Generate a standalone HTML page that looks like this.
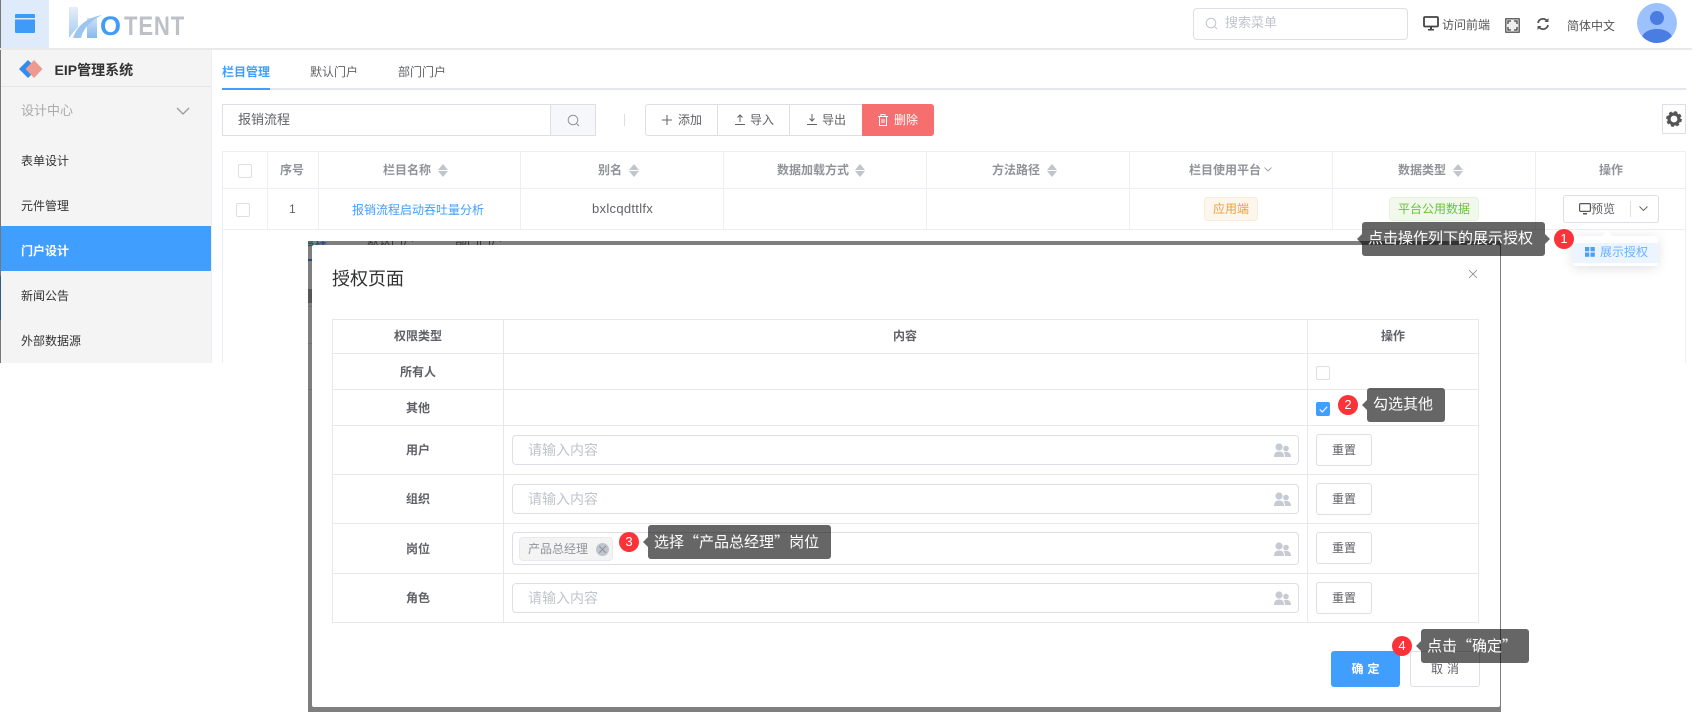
<!DOCTYPE html>
<html lang="zh-CN"><head><meta charset="utf-8"><title>授权页面</title>
<style>
*{box-sizing:border-box}
html,body{margin:0;padding:0;width:1696px;height:713px;overflow:hidden;background:#fff}
body{position:relative;font-family:"Liberation Sans","Noto Sans CJK SC",sans-serif;font-size:12px;color:#606266}
.a{position:absolute}
.t{position:absolute;white-space:nowrap;line-height:20px;height:20px}
.c{text-align:center}
.th{font-weight:700;color:#909399}
.m{color:#333;left:21px}
.v{position:absolute;width:1px;background:#ebeef5}
.h{position:absolute;height:1px;background:#ebeef5}
.mv,.mh{position:absolute;background:#e6e8ec}
.mv{width:1px;top:320px;height:303px}
.mh{height:1px;left:332px;width:1147px}
.ck{position:absolute;width:14px;height:14px;border:1px solid #dcdfe6;border-radius:2px;background:#fff}
.in{position:absolute;left:512px;width:787px;height:30px;border:1px solid #dcdfe6;border-radius:4px;background:#fff}
.ph{position:absolute;left:528px;font-size:14px;color:#c0c4cc;line-height:20px;white-space:nowrap}
.rs{position:absolute;left:1316px;width:56px;height:32px;border:1px solid #dcdfe6;border-radius:3px;background:#fff;text-align:center;line-height:30px;font-size:12px;color:#606266}
.lb{position:absolute;left:333px;width:170px;text-align:center;font-weight:700;line-height:20px;color:#606266}
.tip{position:absolute;height:34px;background:rgba(0,0,0,.6);border-radius:3px;color:#fff;font-size:15px;line-height:34px;padding-left:6px;white-space:nowrap;z-index:20}
.tip:before{content:"";position:absolute;left:-5px;top:12px;border:5px solid transparent;border-left:0;border-right-color:rgba(0,0,0,.6)}
.q{font-family:"Noto Sans CJK SC",sans-serif}
.bd{position:absolute;width:20px;height:20px;border-radius:50%;background:#fb3338;color:#fff;font-size:13px;line-height:20px;text-align:center;z-index:21}
.u{position:absolute;width:0;height:0;border:5px solid transparent;border-top:0;border-bottom:6px solid #c0c4cc}
.d{position:absolute;width:0;height:0;border:5px solid transparent;border-bottom:0;border-top:6px solid #c0c4cc}
svg{position:absolute;display:block}
</style></head><body>

<!-- left edge -->
<div class="a" style="left:0;top:0;width:1px;height:363px;background:#777"></div>
<div class="a" style="left:0;top:276px;width:1px;height:44px;background:#2e5d88"></div>

<!-- header -->
<div class="a" style="left:1px;top:0;width:48px;height:48px;background:#dfeafb"></div>
<svg style="left:15px;top:14px" width="20" height="19" viewBox="0 0 20 19"><path d="M1 0h18a1 1 0 0 1 1 1v3H0V1a1 1 0 0 1 1-1z" fill="#3f9bf8"/><path d="M0 5.500h20V18a1 1 0 0 1-1 1H1a1 1 0 0 1-1-1z" fill="#3f9bf8"/></svg>
<svg style="left:68px;top:6px" width="36" height="33" viewBox="0 0 36 33"><defs><linearGradient id="g" x1="0" y1="0" x2="0" y2="1"><stop offset="0" stop-color="#e6eef9"/><stop offset="1" stop-color="#a4cbf3"/></linearGradient><linearGradient id="g2" x1="0" y1="0" x2="0" y2="1"><stop offset="0" stop-color="#cfe1f6"/><stop offset="1" stop-color="#86b9f0"/></linearGradient></defs><path d="M1 1h9v20C7 24 4 28 1 32z" fill="url(#g)"/><path d="M19 12h10v20H19z" fill="url(#g2)"/><path d="M5 32C9 20 18 12 34 9 24 14 16 21 13 32z" fill="#9cc5f1"/></svg>
<div class="t" style="left:100px;top:11px;height:30px;line-height:30px;font-size:27px;font-weight:700;color:#419cf5">O</div>
<div class="t" style="left:124px;top:11px;height:30px;line-height:30px;font-size:27px;font-weight:700;letter-spacing:1px;color:#bcc1c8;transform:scaleX(.82);transform-origin:0 50%">TENT</div>
<div class="a" style="left:0;top:48px;width:1692px;height:2px;background:#e8e9eb"></div>

<div class="a" style="left:1193px;top:8px;width:215px;height:32px;border:1px solid #dcdfe6;border-radius:4px"></div>
<svg style="left:1205px;top:17px" width="13" height="13" viewBox="0 0 13 13" fill="none" stroke="#c0c4cc" stroke-width="1"><circle cx="6" cy="6" r="4.800"/><path d="M9.500 9.500l2.500 2.500"/></svg>
<div class="t" style="left:1225px;top:13px;font-size:13px;color:#c0c4cc">搜索菜单</div>
<svg style="left:1423px;top:16px" width="16" height="15" viewBox="0 0 16 15"><rect x="1" y="1" width="14" height="9.500" rx="1" fill="#fff" stroke="#444" stroke-width="1.800"/><path d="M5 13h6v1.500H5zM7 11h2v2H7z" fill="#444"/></svg>
<div class="t" style="left:1442px;top:15px;color:#555">访问前端</div>
<svg style="left:1505px;top:18px" width="15" height="15" viewBox="0 0 15 15"><rect width="15" height="15" rx="1" fill="#666"/><rect x="1.500" y="1.500" width="12" height="12" fill="#eee"/><path d="M3 6V3h3M9 3h3v3M12 9v3H9M6 12H3V9" fill="none" stroke="#444" stroke-width="1.300"/></svg>
<svg style="left:1536px;top:17px" width="14" height="14" viewBox="0 0 14 14" fill="none" stroke="#555" stroke-width="1.800"><path d="M2 6a5 5 0 0 1 9-2"/><path d="M12 8a5 5 0 0 1-9 2"/><path d="M12.500 1v4h-4z" fill="#555" stroke="none"/><path d="M1.500 13V9h4z" fill="#555" stroke="none"/></svg>
<div class="t" style="left:1567px;top:16px;color:#555">简体中文</div>
<svg style="left:1637px;top:3px" width="40" height="40" viewBox="0 0 40 40"><defs><clipPath id="cp"><circle cx="20" cy="20" r="20"/></clipPath></defs><circle cx="20" cy="20" r="20" fill="#9dc1fd"/><g clip-path="url(#cp)" fill="#4a7de2"><circle cx="20" cy="15" r="7"/><ellipse cx="20" cy="35" rx="15" ry="9"/></g></svg>

<!-- sidebar -->
<div class="a" style="left:1px;top:50px;width:210px;height:313px;background:#f4f4f4"></div>
<div class="a" style="left:211px;top:50px;width:1px;height:313px;background:#eceef1"></div>
<div class="a" style="left:1px;top:86px;width:210px;height:1px;background:#e4e5e7"></div>
<svg style="left:19px;top:60px" width="24" height="18" viewBox="0 0 24 18"><path d="M9 0l9 9-9 9-9-9z" fill="#2f8cf3"/><path d="M15 0l8.500 9-8.500 9-8.500-9z" fill="#ee9a8e"/></svg>
<div class="t" style="left:54.500px;top:60px;font-size:14px;font-weight:700;color:#333">EIP管理系统</div>
<div class="t" style="left:21px;top:101px;font-size:13px;color:#aaa">设计中心</div>
<svg style="left:176px;top:107px" width="14" height="9" viewBox="0 0 14 9" fill="none" stroke="#999" stroke-width="1.300"><path d="M1 1l6 6 6-6"/></svg>
<div class="t m" style="top:151px">表单设计</div>
<div class="t m" style="top:196px">元件管理</div>
<div class="a" style="left:1px;top:226px;width:210px;height:45px;background:#409eff"></div>
<div class="t m" style="top:241px;color:#fff;font-weight:700">门户设计</div>
<div class="t m" style="top:286px">新闻公告</div>
<div class="t m" style="top:331px">外部数据源</div>

<!-- tabs -->
<div class="t" style="left:222px;top:62px;color:#409eff;font-weight:700">栏目管理</div>
<div class="t" style="left:310px;top:62px">默认门户</div>
<div class="t" style="left:398px;top:62px">部门门户</div>
<div class="a" style="left:222px;top:88px;width:1464px;height:2px;background:#e4e7ed"></div>
<div class="a" style="left:222px;top:88px;width:48px;height:2px;background:#409eff"></div>

<!-- search -->
<div class="a" style="left:222px;top:104px;width:374px;height:32px;border:1px solid #dcdfe6;background:#fff"></div>
<div class="a" style="left:550px;top:104px;width:46px;height:32px;border:1px solid #dcdfe6;background:#f5f7fa"></div>
<div class="t" style="left:238px;top:110px;font-size:13px">报销流程</div>
<svg style="left:567px;top:114px" width="13" height="13" viewBox="0 0 13 13" fill="none" stroke="#909399" stroke-width="1"><circle cx="6" cy="6" r="4.800"/><path d="M9.500 9.500l2.500 2.500"/></svg>
<div class="a" style="left:624px;top:114px;width:1px;height:12px;background:#dcdfe6"></div>

<!-- toolbar -->
<div class="a" style="left:645px;top:104px;width:218px;height:32px;border:1px solid #dcdfe6;border-radius:3px 0 0 3px;background:#fff"></div>
<div class="a" style="left:717px;top:104px;width:1px;height:32px;background:#dcdfe6"></div>
<div class="a" style="left:789px;top:104px;width:1px;height:32px;background:#dcdfe6"></div>
<div class="a" style="left:862px;top:104px;width:72px;height:32px;background:#f76e6f;border-radius:0 3px 3px 0"></div>
<svg style="left:662px;top:115px" width="10" height="10" viewBox="0 0 10 10" stroke="#606266" stroke-width="1"><path d="M5 0v10M0 5h10"/></svg>
<div class="t" style="left:678px;top:110px">添加</div>
<svg style="left:735px;top:114px" width="10" height="11" viewBox="0 0 10 11" fill="none" stroke="#606266" stroke-width="1"><path d="M0 10.500h10M5 8V1M2.500 3.500L5 1l2.500 2.500"/></svg>
<div class="t" style="left:750px;top:110px">导入</div>
<svg style="left:807px;top:114px" width="10" height="11" viewBox="0 0 10 11" fill="none" stroke="#606266" stroke-width="1"><path d="M0 10.500h10M5 0v7M2.500 4.500L5 7l2.500-2.500"/></svg>
<div class="t" style="left:822px;top:110px">导出</div>
<svg style="left:878px;top:114px" width="10" height="12" viewBox="0 0 10 12" fill="none" stroke="#fff" stroke-width="1"><path d="M0 2.500h10M3 2.500V.5h4v2M1.500 2.500v9h7v-9M4 5v4M6 5v4"/></svg>
<div class="t" style="left:894px;top:110px;color:#fff">删除</div>

<div class="a" style="left:1662px;top:104px;width:24px;height:30px;border:1px solid #dcdfe6;background:#fff"></div>
<svg style="left:1666px;top:111px" width="16" height="16" viewBox="0 0 16 16"><circle cx="8" cy="8" r="5" fill="none" stroke="#555" stroke-width="3.200"/><circle cx="8" cy="8" r="6.800" fill="none" stroke="#555" stroke-width="2.200" stroke-dasharray="3 2.340"/></svg>

<!-- main table -->
<div class="h" style="left:222px;top:151px;width:1464px"></div>
<div class="h" style="left:222px;top:188px;width:1464px"></div>
<div class="h" style="left:222px;top:229px;width:1464px"></div>
<div class="v" style="left:222px;top:151px;height:212px"></div>
<div class="v" style="left:1685px;top:151px;height:212px"></div>
<div class="v" style="left:267px;top:151px;height:78px"></div>
<div class="v" style="left:318px;top:151px;height:78px"></div>
<div class="v" style="left:520px;top:151px;height:78px"></div>
<div class="v" style="left:723px;top:151px;height:78px"></div>
<div class="v" style="left:926px;top:151px;height:78px"></div>
<div class="v" style="left:1129px;top:151px;height:78px"></div>
<div class="v" style="left:1332px;top:151px;height:78px"></div>
<div class="v" style="left:1535px;top:151px;height:78px"></div>

<div class="ck" style="left:238px;top:164px"></div>
<div class="ck" style="left:236px;top:203px"></div>
<div class="t th" style="left:280px;top:160px">序号</div>
<div class="t th" style="left:383px;top:160px">栏目名称</div>
<div class="u" style="left:438px;top:164px"></div><div class="d" style="left:438px;top:171px"></div>
<div class="t th" style="left:598px;top:160px">别名</div>
<div class="u" style="left:629px;top:164px"></div><div class="d" style="left:629px;top:171px"></div>
<div class="t th" style="left:777px;top:160px">数据加载方式</div>
<div class="u" style="left:855px;top:164px"></div><div class="d" style="left:855px;top:171px"></div>
<div class="t th" style="left:992px;top:160px">方法路径</div>
<div class="u" style="left:1047px;top:164px"></div><div class="d" style="left:1047px;top:171px"></div>
<div class="t th" style="left:1189px;top:160px">栏目使用平台</div>
<svg style="left:1264px;top:167px" width="8" height="5" viewBox="0 0 8 5" fill="none" stroke="#909399" stroke-width=".8"><path d="M.5.500L4 4 7.500.5"/></svg>
<div class="t th" style="left:1398px;top:160px">数据类型</div>
<div class="u" style="left:1453px;top:164px"></div><div class="d" style="left:1453px;top:171px"></div>
<div class="t th" style="left:1599px;top:160px">操作</div>

<div class="t" style="left:289px;top:199px">1</div>
<div class="t" style="left:352px;top:200px;color:#409eff">报销流程启动吞吐量分析</div>
<div class="t" style="left:592px;top:199px;font-size:13px;letter-spacing:.3px">bxlcqdttlfx</div>
<div class="a c" style="left:1204px;top:197px;width:54px;height:24px;background:#fdf6ec;border:1px solid #faecd8;border-radius:4px;color:#e6a23c;line-height:22px">应用端</div>
<div class="a c" style="left:1389px;top:197px;width:90px;height:24px;background:#f0f9eb;border:1px solid #e1f3d8;border-radius:4px;color:#67c23a;line-height:22px">平台公用数据</div>

<div class="a" style="left:1563px;top:195px;width:96px;height:28px;border:1px solid #dcdfe6;border-radius:3px;background:#fff"></div>
<div class="a" style="left:1630px;top:201px;width:1px;height:16px;background:#dcdfe6"></div>
<svg style="left:1579px;top:203px" width="12" height="12" viewBox="0 0 12 12"><rect x=".6" y=".6" width="10.800" height="7.800" rx="1" fill="none" stroke="#555" stroke-width="1.200"/><path d="M4 10h4v1.500H4z" fill="#555"/></svg>
<div class="t" style="left:1591px;top:199px">预览</div>
<svg style="left:1639px;top:206px" width="9" height="6" viewBox="0 0 9 6" fill="none" stroke="#606266" stroke-width=".9"><path d="M.5.500l4 4 4-4"/></svg>

<!-- dropdown -->
<div class="a" style="left:1573px;top:236px;width:85px;height:30px;background:#fff;border-radius:3px;box-shadow:0 2px 12px rgba(0,0,0,.12)"></div>
<div class="a" style="left:1602px;top:231px;width:0;height:0;border:5px solid transparent;border-top:0;border-bottom:5px solid #fff"></div>
<div class="a" style="left:1573px;top:243px;width:85px;height:20px;background:#ecf5ff"></div>
<svg style="left:1585px;top:247px" width="10" height="10" viewBox="0 0 10 10" fill="#4b9ff5"><rect width="4.300" height="4.300"/><rect x="5.500" width="4.300" height="4.300"/><rect y="5.500" width="4.300" height="4.300"/><rect x="5.500" y="5.500" width="4.300" height="4.300"/></svg>
<div class="t" style="left:1600px;top:242px;color:#66b1ff">展示授权</div>

<!-- modal frame -->
<div class="a" style="left:308px;top:241px;width:1193px;height:471px;background:#7f7f7f;overflow:hidden">
  <div class="t" style="left:-29px;top:-10px;color:#1f4f80;font-weight:700">栏目管理</div>
  <div class="t" style="left:59px;top:-10px;color:#303030">默认门户</div>
  <div class="t" style="left:147px;top:-10px;color:#303030">部门门户</div>
  <div class="a" style="left:0;top:18px;width:4px;height:2px;background:#1f4f80"></div>
  <div class="a" style="left:0;top:48px;width:4px;height:14px;background:#555"></div>
  <div class="a" style="left:0;top:65px;width:4px;height:1px;background:#707070"></div>
  <div class="a" style="left:0;top:102px;width:4px;height:1px;background:#707070"></div>
  <div class="a" style="left:0;top:148px;width:4px;height:1px;background:#707070"></div>
</div>
<div class="a" style="left:312px;top:245px;width:1188px;height:462px;background:#fff;border-radius:2px"></div>

<div class="t" style="left:332px;top:267px;height:24px;line-height:24px;font-size:18px;color:#303133">授权页面</div>
<svg style="left:1469px;top:270px" width="8" height="8" viewBox="0 0 8 8" stroke="#909399" stroke-width=".9"><path d="M0 0l8 8M8 0L0 8"/></svg>

<!-- modal table -->
<div class="mh" style="top:319px"></div>
<div class="mh" style="top:353px"></div>
<div class="mh" style="top:389px"></div>
<div class="mh" style="top:425px"></div>
<div class="mh" style="top:474px"></div>
<div class="mh" style="top:523px"></div>
<div class="mh" style="top:573px"></div>
<div class="mh" style="top:622px"></div>
<div class="mv" style="left:332px;top:319px"></div>
<div class="mv" style="left:503px;top:319px"></div>
<div class="mv" style="left:1307px;top:319px"></div>
<div class="mv" style="left:1478px;top:319px"></div>

<div class="lb" style="top:326px">权限类型</div>
<div class="t" style="left:893px;top:326px;font-weight:700">内容</div>
<div class="t" style="left:1381px;top:326px;font-weight:700">操作</div>
<div class="lb" style="top:362px">所有人</div>
<div class="lb" style="top:398px">其他</div>
<div class="lb" style="top:440px">用户</div>
<div class="lb" style="top:489px">组织</div>
<div class="lb" style="top:539px">岗位</div>
<div class="lb" style="top:588px">角色</div>

<div class="ck" style="left:1316px;top:366px"></div>
<div class="ck" style="left:1316px;top:402px;background:#409eff;border-color:#409eff"></div>
<svg style="left:1319px;top:406px" width="9" height="7" viewBox="0 0 9 7" fill="none" stroke="#fff" stroke-width="1.100"><path d="M.8 3.500l2.500 2.500L8.200.8"/></svg>

<div class="in" style="top:435px"></div><div class="ph" style="top:440px">请输入内容</div>
<div class="in" style="top:484px"></div><div class="ph" style="top:489px">请输入内容</div>
<div class="in" style="top:532px;height:33px"></div>
<div class="in" style="top:583px"></div><div class="ph" style="top:588px">请输入内容</div>

<div class="a" style="left:519px;top:537px;width:94px;height:24px;background:#f4f4f5;border:1px solid #e9e9eb;border-radius:4px"></div>
<div class="t" style="left:528px;top:539px;color:#909399">产品总经理</div>
<div class="a" style="left:596px;top:543px;width:13px;height:13px;border-radius:50%;background:#c0c4cc"></div>
<svg style="left:599px;top:546px" width="7" height="7" viewBox="0 0 7 7" stroke="#909399" stroke-width="1"><path d="M0 0l7 7M7 0L0 7"/></svg>

<svg style="left:1274px;top:443px" width="17" height="14" viewBox="0 0 17 14" fill="#c6cad3"><circle cx="5" cy="4" r="3.600"/><path d="M0 14c0-4 2-5.500 5-5.500S10 10 10 14z"/><circle cx="12" cy="5.500" r="2.800"/><path d="M11 14c0-2-.4-3.500-1.300-4.700 2.800-1 7.300-.5 7.300 4.700z"/></svg>
<svg style="left:1274px;top:492px" width="17" height="14" viewBox="0 0 17 14" fill="#c6cad3"><circle cx="5" cy="4" r="3.600"/><path d="M0 14c0-4 2-5.500 5-5.500S10 10 10 14z"/><circle cx="12" cy="5.500" r="2.800"/><path d="M11 14c0-2-.4-3.500-1.300-4.700 2.800-1 7.300-.5 7.300 4.700z"/></svg>
<svg style="left:1274px;top:542px" width="17" height="14" viewBox="0 0 17 14" fill="#c6cad3"><circle cx="5" cy="4" r="3.600"/><path d="M0 14c0-4 2-5.500 5-5.500S10 10 10 14z"/><circle cx="12" cy="5.500" r="2.800"/><path d="M11 14c0-2-.4-3.500-1.300-4.700 2.800-1 7.300-.5 7.300 4.700z"/></svg>
<svg style="left:1274px;top:591px" width="17" height="14" viewBox="0 0 17 14" fill="#c6cad3"><circle cx="5" cy="4" r="3.600"/><path d="M0 14c0-4 2-5.500 5-5.500S10 10 10 14z"/><circle cx="12" cy="5.500" r="2.800"/><path d="M11 14c0-2-.4-3.500-1.300-4.700 2.800-1 7.300-.5 7.300 4.700z"/></svg>

<div class="rs" style="top:434px">重置</div>
<div class="rs" style="top:483px">重置</div>
<div class="rs" style="top:532px">重置</div>
<div class="rs" style="top:582px">重置</div>

<div class="a c" style="left:1331px;top:651px;width:69px;height:36px;padding-left:4px;background:#409eff;border-radius:3px;color:#fff;font-weight:700;line-height:37px;letter-spacing:4px">确定</div>
<div class="a c" style="left:1410px;top:651px;width:70px;height:36px;padding-left:4px;background:#fff;border:1px solid #dcdfe6;border-radius:3px;line-height:35px;letter-spacing:4px">取消</div>

<!-- guide tips -->
<div class="tip" style="left:1362px;top:222px;width:183px">点击操作列下的展示授权</div>
<div class="a" style="left:1545px;top:234px;width:0;height:0;border:5px solid transparent;border-right:0;border-left-color:rgba(0,0,0,.6);z-index:20"></div>
<div class="bd" style="left:1554px;top:229px">1</div>

<div class="tip" style="left:1367px;top:388px;width:78px">勾选其他</div>
<div class="bd" style="left:1338px;top:395px">2</div>

<div class="tip" style="left:648px;top:525px;width:183px">选择<span class="q">“</span>产品总经理<span class="q">”</span>岗位</div>
<div class="bd" style="left:619px;top:532px">3</div>

<div class="tip" style="left:1421px;top:629px;width:108px">点击<span class="q">“</span>确定<span class="q">”</span></div>
<div class="bd" style="left:1392px;top:636px">4</div>

</body></html>
